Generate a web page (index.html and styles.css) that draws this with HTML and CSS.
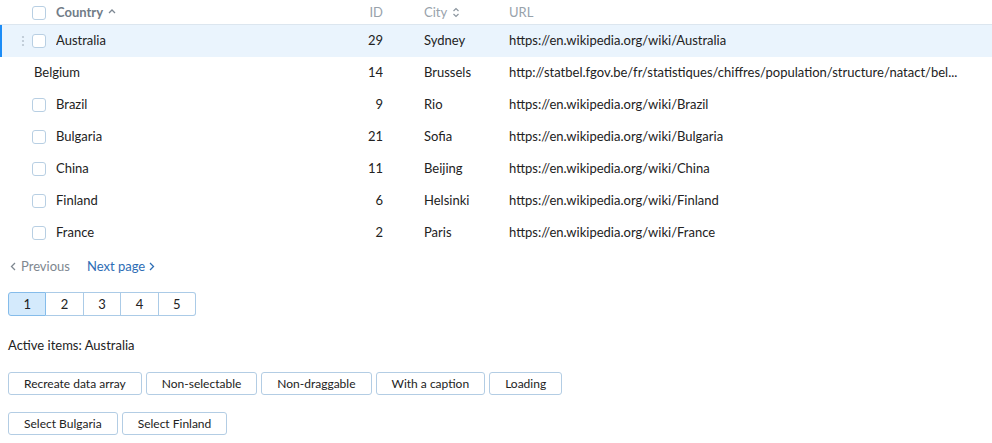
FILE: index.html
```html
<!DOCTYPE html>
<html>
<head>
<meta charset="utf-8">
<link rel="stylesheet" href="styles.css">
</head>
<body>
<div class="table">
  <div class="row head">
    <div class="cell"></div>
    <div class="cell"><span class="check"></span></div>
    <div class="cell country-h">Country <svg class="sort-up" width="8" height="6" viewBox="0 0 8 6"><path d="M1 5 L4 2 L7 5" fill="none" stroke="#7d8893" stroke-width="1.3"/></svg></div>
    <div class="cell num">ID</div>
    <div class="cell city">City <svg class="sort-both" width="8" height="11" viewBox="0 0 8 11"><path d="M1.5 4 L4 1.5 L6.5 4 M1.5 7 L4 9.5 L6.5 7" fill="none" stroke="#8d97a0" stroke-width="1.2"/></svg></div>
    <div class="cell url">URL</div>
  </div>
  <div class="row active">
    <div class="cell handle"><svg width="4" height="12" viewBox="0 0 4 12"><circle cx="2" cy="2" r="1.1" fill="#b9c5d0"/><circle cx="2" cy="6" r="1.1" fill="#b9c5d0"/><circle cx="2" cy="10" r="1.1" fill="#b9c5d0"/></svg></div>
    <div class="cell"><span class="check"></span></div>
    <div class="cell">Australia</div>
    <div class="cell num">29</div>
    <div class="cell city">Sydney</div>
    <div class="cell url">https://en.wikipedia.org/wiki/Australia</div>
  </div>
  <div class="row">
    <div class="cell"></div>
    <div class="cell nocheck">Belgium</div>
    <div class="cell num">14</div>
    <div class="cell city">Brussels</div>
    <div class="cell url">http://statbel.fgov.be/fr/statistiques/chiffres/population/structure/natact/bel...</div>
  </div>
  <div class="row">
    <div class="cell"></div>
    <div class="cell"><span class="check"></span></div>
    <div class="cell">Brazil</div>
    <div class="cell num">9</div>
    <div class="cell city">Rio</div>
    <div class="cell url">https://en.wikipedia.org/wiki/Brazil</div>
  </div>
  <div class="row">
    <div class="cell"></div>
    <div class="cell"><span class="check"></span></div>
    <div class="cell">Bulgaria</div>
    <div class="cell num">21</div>
    <div class="cell city">Sofia</div>
    <div class="cell url">https://en.wikipedia.org/wiki/Bulgaria</div>
  </div>
  <div class="row">
    <div class="cell"></div>
    <div class="cell"><span class="check"></span></div>
    <div class="cell">China</div>
    <div class="cell num">11</div>
    <div class="cell city">Beijing</div>
    <div class="cell url">https://en.wikipedia.org/wiki/China</div>
  </div>
  <div class="row">
    <div class="cell"></div>
    <div class="cell"><span class="check"></span></div>
    <div class="cell">Finland</div>
    <div class="cell num">6</div>
    <div class="cell city">Helsinki</div>
    <div class="cell url">https://en.wikipedia.org/wiki/Finland</div>
  </div>
  <div class="row">
    <div class="cell"></div>
    <div class="cell"><span class="check"></span></div>
    <div class="cell">France</div>
    <div class="cell num">2</div>
    <div class="cell city">Paris</div>
    <div class="cell url">https://en.wikipedia.org/wiki/France</div>
  </div>
</div>

<div class="nav">
  <span class="prev"><svg width="6" height="9" viewBox="0 0 6 9"><path d="M5 1 L1.5 4.5 L5 8" fill="none" stroke="#7e8790" stroke-width="1.3"/></svg>Previous</span>
  <span class="next">Next page<svg width="6" height="9" viewBox="0 0 6 9"><path d="M1 1 L4.5 4.5 L1 8" fill="none" stroke="#2d6db5" stroke-width="1.3"/></svg></span>
</div>

<div class="pages">
  <span class="page current">1</span><span class="page">2</span><span class="page">3</span><span class="page">4</span><span class="page">5</span>
</div>

<div class="active-items">Active items: Australia</div>

<div class="btn-row">
  <button class="btn">Recreate data array</button>
  <button class="btn">Non-selectable</button>
  <button class="btn">Non-draggable</button>
  <button class="btn">With a caption</button>
  <button class="btn">Loading</button>
</div>
<div class="btn-row second">
  <button class="btn">Select Bulgaria</button>
  <button class="btn">Select Finland</button>
</div>
</body>
</html>
```
FILE: styles.css
```css
html, body {
  margin: 0;
  padding: 0;
  background: #ffffff;
}
body {
  font-family: Lato, "Open Sans", sans-serif;
  font-size: 13px;
  color: #222222;
  width: 992px;
  height: 443px;
  overflow: hidden;
}
.table {
  width: 992px;
}
.row {
  display: grid;
  grid-template-columns: 32px 24px 244px 83px 126px 450px;
  height: 32px;
  box-sizing: border-box;
  padding-bottom: 2px;
  align-items: center;
}
.row.head {
  height: 25px;
  padding-bottom: 0;
  border-bottom: 1px solid #dce6ef;
  color: #98a2ab;
}
.row.active {
  background: #eaf4fd;
  box-shadow: inset 2px 0 0 #1c8cf6;
}
.cell {
  white-space: nowrap;
  overflow: hidden;
  display: flex;
  align-items: center;
  min-width: 0;
}
.cell.handle {
  padding-left: 21px;
  padding-top: 2px;
}
.cell.handle svg {
  display: block;
}
.check {
  display: block;
  width: 12px;
  height: 12px;
  border: 1px solid #b8cfe3;
  border-radius: 3px;
  background: #ffffff;
}
.row .check {
  margin-top: 2px;
}
.head .check {
  margin-top: 1px;
}
.nocheck {
  grid-column: 2 / 4;
  padding-left: 2px;
}
.country-h {
  font-weight: 700;
  color: #717c87;
}
.sort-up {
  margin-left: 5px;
  margin-top: -3px;
}
.sort-both {
  margin-left: 5px;
}
.num {
  justify-content: flex-end;
}
.city {
  padding-left: 41px;
}
.url {
  display: block;
  line-height: 30px;
  padding-right: 3px;
}
.head .url {
  line-height: 24px;
}

.nav {
  margin-top: 8px;
  height: 18px;
  line-height: 18px;
  padding-left: 10px;
  display: flex;
  gap: 17px;
}
.prev {
  color: #7e8790;
  display: flex;
  align-items: center;
  gap: 5px;
}
.next {
  color: #2d6db5;
  display: flex;
  align-items: center;
  gap: 4px;
}

.pages {
  margin: 17px 0 0 8px;
  display: flex;
  width: 188px;
}
.page {
  flex: 1;
  height: 22px;
  line-height: 22px;
  text-align: center;
  border: 1px solid #abcbe7;
  border-left: none;
  font-size: 13px;
  color: #222222;
  background: #ffffff;
}
.page:first-child {
  border-left: 1px solid #abcbe7;
  border-radius: 3px 0 0 3px;
}
.page:last-child {
  border-radius: 0 3px 3px 0;
}
.page.current {
  background: #d4eafc;
  border-color: #85bcea;
  border-right: 1px solid #85bcea;
}

.active-items {
  margin: 20px 0 0 8px;
  line-height: 18px;
}

.btn-row {
  margin: 18px 0 0 8px;
  display: flex;
  gap: 4px;
}
.btn-row.second {
  margin-top: 17px;
}
.btn {
  font-family: Lato, "Open Sans", sans-serif;
  font-size: 12px;
  color: #222222;
  height: 23px;
  padding: 0 15px;
  background: #ffffff;
  border: 1px solid #b3cde4;
  border-radius: 3px;
  line-height: 21px;
}
```
